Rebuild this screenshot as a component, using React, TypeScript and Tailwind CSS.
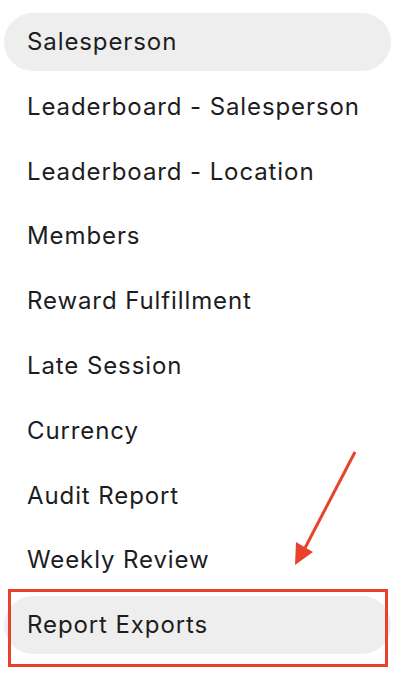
const items = [
  'Salesperson',
  'Leaderboard - Salesperson',
  'Leaderboard - Location',
  'Members',
  'Reward Fulfillment',
  'Late Session',
  'Currency',
  'Audit Report',
  'Weekly Review',
  'Report Exports',
];

const active = new Set(['Salesperson', 'Report Exports']);

export default function App() {
  return (
    <div className="relative w-[418px] h-[674px] bg-white overflow-hidden" style={{ fontFamily: 'Inter, "Noto Sans", sans-serif' }}>
      <nav className="flex flex-col gap-[6.8px] pt-[13px] pl-[4px] w-[391px]">
        {items.map((label) => (
          <div
            key={label}
            className={
              'h-[58px] flex items-center pl-[23px] rounded-full text-[24px] text-[#1d1d1f] tracking-[0.9px] ' +
              (active.has(label) ? 'bg-[#eeeeee]' : '')
            }
          >
            {label}
          </div>
        ))}
      </nav>

      {/* annotation */}
      <div className="absolute left-[8px] top-[589px] w-[380px] h-[78px] border-[3px] border-[#e8432a]" />
      <svg className="absolute left-0 top-0" width="418" height="674" viewBox="0 0 418 674">
        <line x1="355" y1="452" x2="305" y2="548" stroke="#e8432a" strokeWidth="3" />
        <polygon points="295,565 296,542 313,552" fill="#e8432a" />
      </svg>
    </div>
  );
}
